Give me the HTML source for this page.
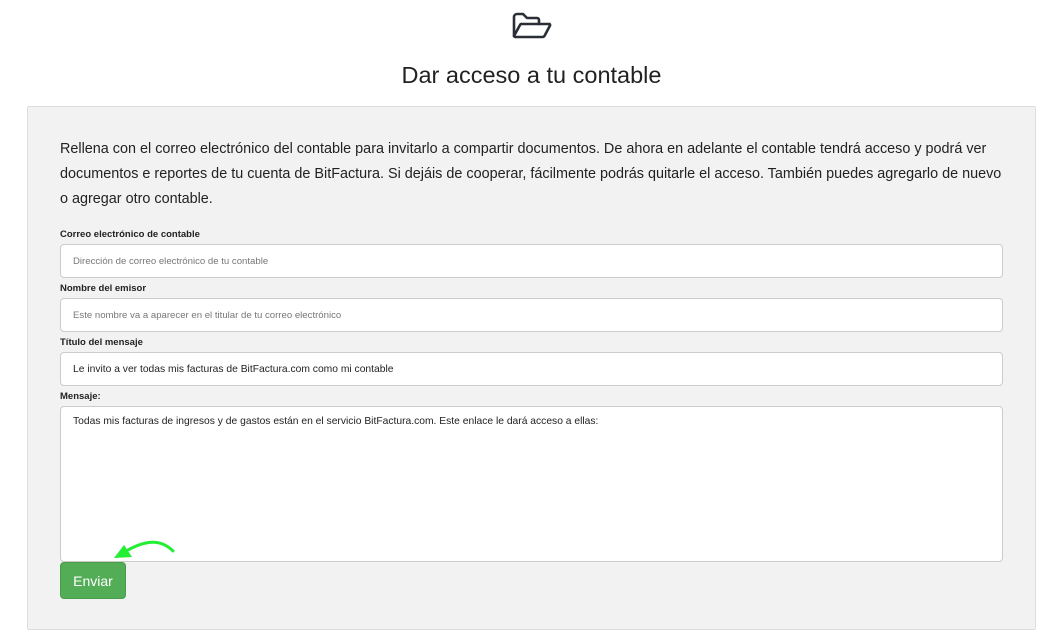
<!DOCTYPE html>
<html><head><meta charset="utf-8"><style>
body{margin:0;background:#fff;font-family:"Liberation Sans",sans-serif;color:#222;width:1053px;height:638px;overflow:hidden;position:relative}
.icon{position:absolute;left:510px;top:10px}
h1{position:absolute;top:62px;left:0;width:1063px;text-align:center;margin:0;font-weight:normal;font-size:23.5px;color:#222}
.panel{position:absolute;left:27px;top:106px;width:1007px;height:522px;background:#f2f2f2;border:1px solid #ddd;border-radius:2px}
.p{position:absolute;left:32px;top:30px;width:950px;font-size:14.4px;line-height:25px;color:#222}
.lab{position:absolute;left:32px;font-size:9.5px;font-weight:bold;color:#222}
.in{position:absolute;left:32px;width:943px;height:34px;background:#fff;border:1px solid #ccc;border-radius:4px;font-size:10.3px;box-sizing:border-box;padding:0 12px;line-height:34px}
.ph{color:#777;font-size:9.6px}
.btn{position:absolute;left:32px;top:455px;width:66px;height:37px;background:#53ad57;border:1px solid #479c4a;border-radius:4px;color:#fff;font-size:14px;text-align:center;line-height:37px;box-sizing:border-box}
</style></head><body>
<svg class="icon" width="44" height="32" viewBox="0 0 44 32" fill="none" stroke="#2a2e36" stroke-width="2.6" stroke-linejoin="round" stroke-linecap="round"><path d="M4 26V7a3 3 0 0 1 3-3h6l4 4h10a2 2 0 0 1 2 2v4"/><path d="M4 26l6-11a2 2 0 0 1 2-1h27a1 1 0 0 1 1 1.5l-5 9.5a3 3 0 0 1-3 2H6a2 2 0 0 1-2-1z"/></svg>
<h1>Dar acceso a tu contable</h1>
<div class="panel">
<div class="p">Rellena con el correo electrónico del contable para invitarlo a compartir documentos. De ahora en adelante el contable tendrá acceso y podrá ver documentos e reportes de tu cuenta de BitFactura. Si dejáis de cooperar, fácilmente podrás quitarle el acceso. También puedes agregarlo de nuevo o agregar otro contable.</div>
<div class="lab" style="top:122px">Correo electrónico de contable</div>
<div class="in ph" style="top:137px">Dirección de correo electrónico de tu contable</div>
<div class="lab" style="top:176px">Nombre del emisor</div>
<div class="in ph" style="top:191px">Este nombre va a aparecer en el titular de tu correo electrónico</div>
<div class="lab" style="top:230px">Título del mensaje</div>
<div class="in" style="top:245px">Le invito a ver todas mis facturas de BitFactura.com como mi contable</div>
<div class="lab" style="top:284px">Mensaje:</div>
<div class="in" style="top:299px;height:156px;line-height:16px;padding-top:7px">Todas mis facturas de ingresos y de gastos están en el servicio BitFactura.com. Este enlace le dará acceso a ellas:</div>
<div class="btn">Enviar</div>
</div>
<svg style="position:absolute;left:110px;top:535px" width="70" height="30" viewBox="0 0 70 30"><path d="M63 16C52 5 38 4 18 15" stroke="#22ee33" stroke-width="3" fill="none" stroke-linecap="round"/><path d="M4 23l18-1-8-12z" fill="#22ee33"/></svg>
</body></html>
